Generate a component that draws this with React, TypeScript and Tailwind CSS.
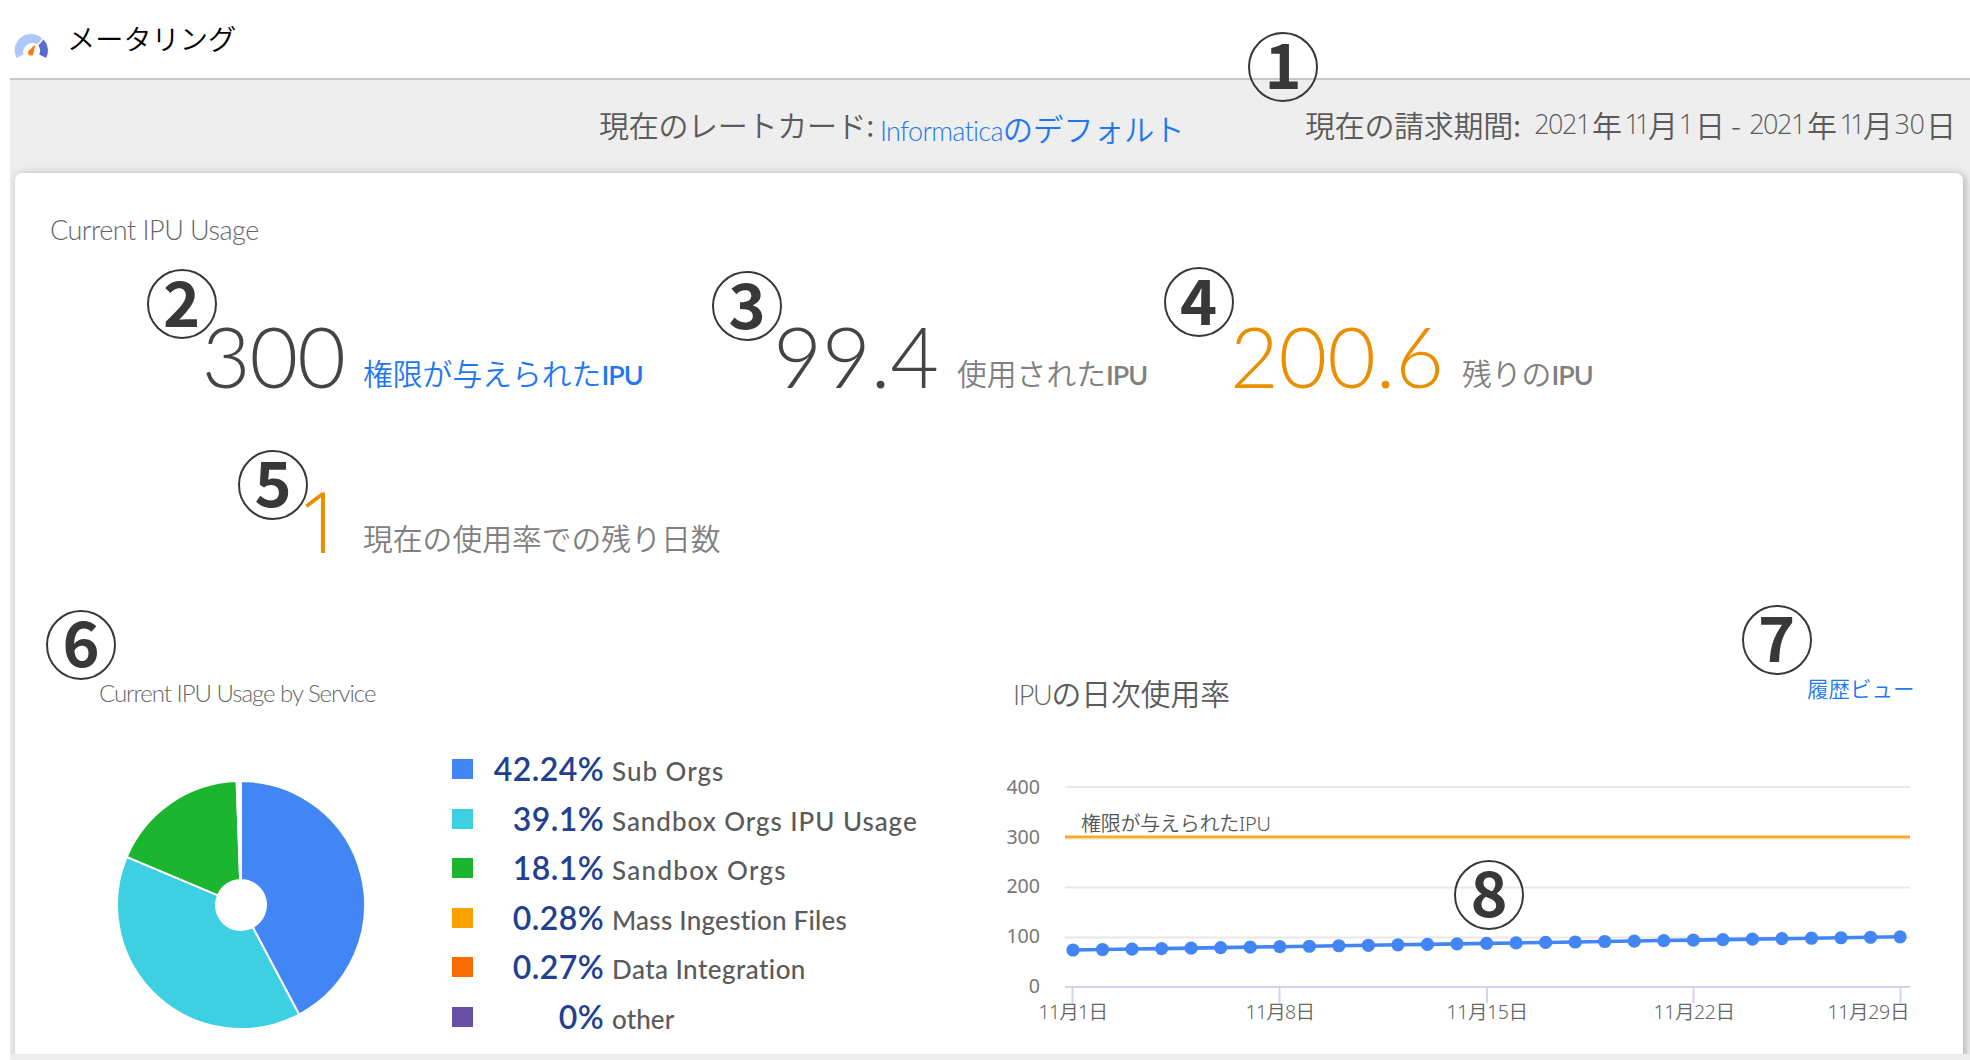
const jp = "font-['Noto_Sans_CJK_JP',sans-serif] font-[350]"

const services = [
  { name: 'Sub Orgs', pct: 42.24, color: '#4285f4', spacing: 'tracking-[1px]' },
  { name: 'Sandbox Orgs IPU Usage', pct: 39.1, color: '#3dcfe2', spacing: 'tracking-[0.95px]' },
  { name: 'Sandbox Orgs', pct: 18.1, color: '#1cb530', spacing: 'tracking-[1.3px]' },
  { name: 'Mass Ingestion Files', pct: 0.28, color: '#fba104', spacing: 'tracking-[0.25px]' },
  { name: 'Data Integration', pct: 0.27, color: '#f96c02', spacing: 'tracking-[0.45px]' },
  { name: 'other', pct: 0, color: '#664fa6', spacing: 'tracking-[0.1px]' },
]

const steps = [
  { n: 1, x: 1283, y: 66.5 },
  { n: 2, x: 181.5, y: 304 },
  { n: 3, x: 747, y: 306 },
  { n: 4, x: 1198.5, y: 302 },
  { n: 5, x: 273, y: 484.5 },
  { n: 6, x: 81, y: 644.5 },
  { n: 7, x: 1776.5, y: 639.5 },
  { n: 8, x: 1489, y: 894.5 },
]

const ticks = [
  { x: 1072.5, label: '11月1日', from: 1038.5, to: 1108 },
  { x: 1279.5, label: '11月8日', from: 1245.5, to: 1315 },
  { x: 1487, label: '11月15日', from: 1446.5, to: 1528 },
  { x: 1693.5, label: '11月22日', from: 1653.5, to: 1735 },
  { x: 1900.5, label: '11月29日', from: 1827.5, to: 1909.5 },
]

const grid = [
  { v: 400, y: 787 },
  { v: 200, y: 887.5 },
  { v: 100, y: 937.5 },
]

const usage = Array.from({ length: 29 }, (_, i) => ({
  x: 1073 + i * 29.54,
  y: 950 - (13.2 * i) / 28,
}))

function GaugeIcon() {
  return (
    <svg className="h-[26px] w-[34px]" viewBox="0 0 34 26">
      <path d="M2.6 25A16.3 16.3 0 0 1 28.3 5.6L23.2 11.4A9.3 9.3 0 0 0 9.4 21.6Z" fill="#aec7fb" />
      <path d="M29.6 6.6A16.3 16.3 0 0 1 32.2 25L25.2 21.6A9.3 9.3 0 0 0 24.4 12.4Z" fill="#5b6dca" />
      <path d="M20.6 12.6L19.2 18.8L15.4 17.8Z" fill="#ff7a0a" stroke="#ff7a0a" strokeWidth="1" />
      <circle cx="16.8" cy="19.8" r="2.8" fill="#ff7a0a" />
    </svg>
  )
}

function Stat({ value, valueClass, labelClass, children }: any) {
  return (
    <div className="flex items-start gap-[18px]">
      <span className={`text-right text-[84px] leading-[84px] font-light ${valueClass}`}>{value}</span>
      <span className={`mt-[38px] whitespace-nowrap text-[29.8px] leading-[40px] ${jp} ${labelClass}`}>
        {children}
      </span>
    </div>
  )
}

function Ipu() {
  return <span className="font-['Lato',sans-serif] text-[27px] font-semibold tracking-[-1px]">IPU</span>
}

function Pie() {
  const c = 124
  const point = (share: number, r: number) => {
    const a = share * 2 * Math.PI
    return `${c + r * Math.sin(a)} ${c - r * Math.cos(a)}`
  }
  let start = 0
  return (
    <svg className="h-[248px] w-[248px]" viewBox="0 0 248 248">
      {services.slice(0, 5).map((s) => {
        const from = start
        const to = start + s.pct / 100
        start = to
        const big = to - from > 0.5 ? 1 : 0
        return (
          <path
            key={s.name}
            d={`M${point(from, c)}A${c} ${c} 0 ${big} 1 ${point(to, c)}L${point(to, 25)}A25 25 0 ${big} 0 ${point(from, 25)}Z`}
            fill={s.color}
            stroke="#fff"
            strokeWidth="2"
          />
        )
      })}
    </svg>
  )
}

function UsageChart() {
  return (
    <svg className="h-[260px] w-[930px] font-['Noto_Sans','Noto_Sans_CJK_JP',sans-serif]" viewBox="990 770 930 260">
      {grid.map((g) => (
        <line key={g.v} x1="1065" x2="1910" y1={g.y} y2={g.y} stroke="#e8e8e8" strokeWidth="2" />
      ))}
      <line x1="1065" x2="1910" y1="838.2" y2="838.2" stroke="#f2dcae" strokeWidth="2.5" />
      <line x1="1065" x2="1910" y1="836.7" y2="836.7" stroke="#f9a928" strokeWidth="2.4" />
      <line x1="1065" x2="1910" y1="987" y2="987" stroke="#ccd6eb" strokeWidth="2" />
      {[400, 300, 200, 100, 0].map((v, i) => (
        <text key={v} x="1040" y={794 + i * 49.7} textAnchor="end" fontSize="19.6" fill="#777">{v}</text>
      ))}
      {ticks.map((t) => (
        <g key={t.label}>
          <line x1={t.x} x2={t.x} y1="987" y2="1003" stroke="#ccd6eb" strokeWidth="2" />
          <text x={t.from} y="1018.5" textLength={t.to - t.from} fontSize="19.6" fontWeight="350" fill="#666">{t.label}</text>
        </g>
      ))}
      <text x="1081" y="830.5" textLength="190" fontSize="20" fontWeight="350" fill="#555">権限が与えられたIPU</text>
      <polyline points={usage.map((p) => `${p.x},${p.y}`).join(' ')} fill="none" stroke="#4285f4" strokeWidth="3.6" />
      {usage.map((p) => (
        <circle key={p.x} cx={p.x} cy={p.y} r="6.6" fill="#4285f4" />
      ))}
    </svg>
  )
}

export default function App() {
  return (
    <div className="relative h-[1060px] w-[1970px] overflow-hidden bg-white font-['Lato',sans-serif]">
      <header className="flex h-[78px] items-start pl-[14px]">
        <div className="pt-[33px]"><GaugeIcon /></div>
        <h1 className={`ml-[19px] pt-[18px] text-[28.2px] leading-[40px] text-black ${jp}`}>メータリング</h1>
      </header>

      <main className="ml-[10px] h-[976px] overflow-hidden border-t-2 border-[#c6c6c6] bg-[#eeeeee]">
        <div className={`flex h-[93px] items-start text-[30px] leading-[40px] text-[#5a5a5a] ${jp}`}>
          <span className="ml-[589px] mt-[24px] w-[281px] whitespace-nowrap tracking-[-0.3px]">現在のレートカード:</span>
          <a href="#" className="mt-[28px] w-[425px] whitespace-nowrap text-[30.3px] text-[#1f78f0]">
            <span className="font-['Lato',sans-serif] text-[27px] font-light tracking-[-0.7px]">Informatica</span>のデフォルト
          </a>
          <span className="mt-[24px] w-[227px] whitespace-nowrap tracking-[-0.3px]">現在の請求期間:</span>
          <span className="mt-[24px] flex text-center">
            <span className="w-[60px] font-['Open_Sans',sans-serif] text-[27px] font-light tracking-[-1.5px]">2021</span>
            <span>年</span>
            <span className="w-[26px] font-['Open_Sans',sans-serif] text-[27px] font-light tracking-[-5px]">11</span>
            <span>月</span>
            <span className="w-[17px] font-['Open_Sans',sans-serif] text-[27px] font-light">1</span>
            <span>日</span>
            <span className="w-[22px] font-light">-</span>
            <span className="w-[60px] font-['Open_Sans',sans-serif] text-[27px] font-light tracking-[-1.5px]">2021</span>
            <span>年</span>
            <span className="w-[26px] font-['Open_Sans',sans-serif] text-[27px] font-light tracking-[-5px]">11</span>
            <span>月</span>
            <span className="w-[33px] font-['Open_Sans',sans-serif] text-[27px] font-light tracking-[-0.5px]">30</span>
            <span>日</span>
          </span>
        </div>

        <section className="ml-[5px] h-[900px] w-[1948px] rounded-[7px] bg-white pt-[41px] shadow-[2px_1px_8px_rgba(0,0,0,0.28)]">
          <h2 className="ml-[35px] text-[27px] leading-[32px] font-light tracking-[-0.5px] text-[#666]">Current IPU Usage</h2>

          <div className="mt-[68px] flex">
            <Stat value="300" valueClass="w-[330px] tracking-[-1px] text-[#444]" labelClass="w-[327px] text-[#1f78f0]">
              権限が与えられた<Ipu />
            </Stat>
            <Stat value="99.4" valueClass="w-[249px] text-[#444]" labelClass="w-[256px] text-[#808080]">
              使用された<Ipu />
            </Stat>
            <Stat value="200.6" valueClass="w-[231px] tracking-[-0.1px] text-[#ea8f00]" labelClass="text-[#808080]">
              残りの<Ipu />
            </Stat>
          </div>
          <div className="mt-[81px] flex">
            <Stat value="1" valueClass="w-[330px] font-['Open_Sans',sans-serif] text-[#ea8f00]" labelClass="text-[#808080]">
              現在の使用率での残り日数
            </Stat>
          </div>

          <div className="mt-[109px] flex">
            <div className="w-[975px]">
              <h3 className="ml-[84px] mt-[6px] text-[24px] leading-[30px] font-light tracking-[-1.03px] text-[#666]">
                Current IPU Usage by Service
              </h3>
              <div className="mt-[36px] flex">
                <div className="ml-[102px] mt-[37px]"><Pie /></div>
                <ul className="ml-[87px]">
                  {services.map((s) => (
                    <li key={s.name} className="flex h-[49.6px] items-start leading-[49.6px]">
                      <span className="mt-[15px] h-[20px] w-[21px]" style={{ background: s.color }} />
                      <span className="w-[131px] text-right text-[32px] font-semibold tracking-[0.4px] text-[#233f8f]">{s.pct}%</span>
                      <span className={`ml-[8px] pt-[3px] text-[26px] font-medium text-[#5a5a5a] ${s.spacing}`}>{s.name}</span>
                    </li>
                  ))}
                </ul>
              </div>
            </div>
            <div>
              <div className="flex items-start">
                <h3 className={`ml-[23px] w-[794px] text-[29.8px] leading-[40px] text-[#5a5a5a] ${jp}`}>
                  <span className="font-['Lato',sans-serif] text-[27px] font-light tracking-[-1.3px] text-[#666]">IPU</span>の日次使用率
                </h3>
                <a href="#" className={`mt-[1px] text-[21.5px] leading-[30px] text-[#1f78f0] ${jp}`}>履歴ビュー</a>
              </div>
              <div className="mt-[55px]"><UsageChart /></div>
            </div>
          </div>
        </section>
      </main>
      <div className="ml-[10px] h-[6px] bg-[#ededed]" />

      {/* numbered callouts */}
      {steps.map((s) => (
        <span
          key={s.n}
          className="absolute flex h-[70px] w-[70px] -translate-x-1/2 -translate-y-1/2 items-center justify-center rounded-full border-2 border-[#383838] pb-[10px] font-['Noto_Sans_CJK_JP',sans-serif] text-[63px] leading-none font-bold text-[#383838]"
          style={{ left: s.x, top: s.y }}
        >
          {s.n}
        </span>
      ))}
    </div>
  )
}
